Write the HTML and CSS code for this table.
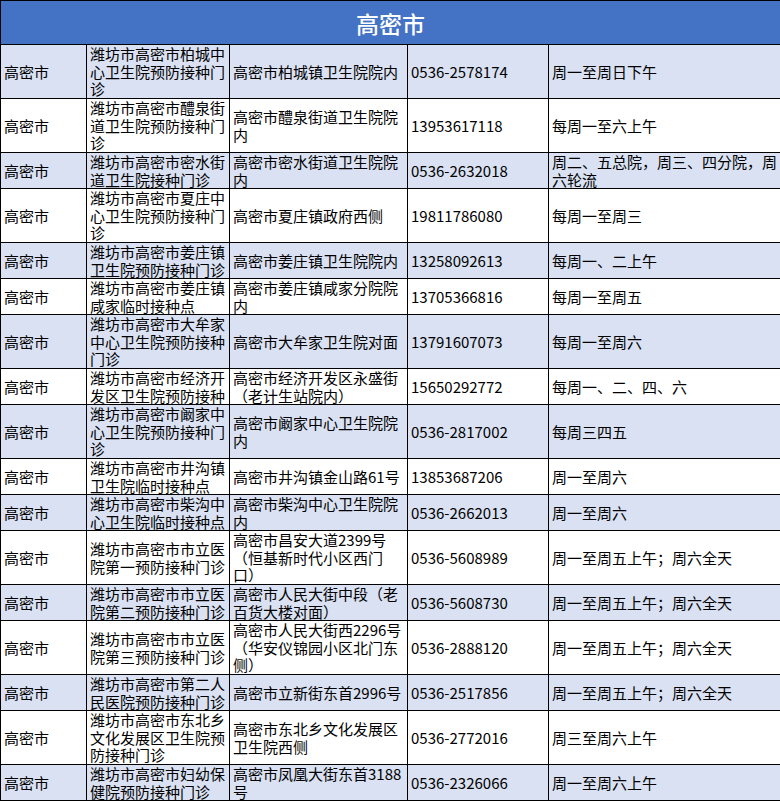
FILE: index.html
```html
<!DOCTYPE html>
<html lang="zh-CN">
<head>
<meta charset="utf-8">
<title>高密市预防接种门诊</title>
<link rel="stylesheet" href="styles.css">
</head>
<body>
<table class="sheet">
  <colgroup>
    <col class="c-city">
    <col class="c-name">
    <col class="c-addr">
    <col class="c-tel">
    <col class="c-time">
  </colgroup>
  <thead>
    <tr class="head"><th colspan="5">高密市</th></tr>
  </thead>
  <tbody>
    <tr class="r3 blue"><td>高密市</td><td>潍坊市高密市柏城中<br>心卫生院预防接种门<br>诊</td><td>高密市柏城镇卫生院院内</td><td>0536-2578174</td><td>周一至周日下午</td></tr>
    <tr class="r3"><td>高密市</td><td>潍坊市高密市醴泉街<br>道卫生院预防接种门<br>诊</td><td>高密市醴泉街道卫生院院<br>内</td><td>13953617118</td><td>每周一至六上午</td></tr>
    <tr class="r2 blue"><td>高密市</td><td>潍坊市高密市密水街<br>道卫生院接种门诊</td><td>高密市密水街道卫生院院<br>内</td><td>0536-2632018</td><td>周二、五总院，周三、四分院，周<br>六轮流</td></tr>
    <tr class="r3"><td>高密市</td><td>潍坊市高密市夏庄中<br>心卫生院预防接种门<br>诊</td><td>高密市夏庄镇政府西侧</td><td>19811786080</td><td>每周一至周三</td></tr>
    <tr class="r2 blue"><td>高密市</td><td>潍坊市高密市姜庄镇<br>卫生院预防接种门诊</td><td>高密市姜庄镇卫生院院内</td><td>13258092613</td><td>每周一、二上午</td></tr>
    <tr class="r2"><td>高密市</td><td>潍坊市高密市姜庄镇<br>咸家临时接种点</td><td>高密市姜庄镇咸家分院院<br>内</td><td>13705366816</td><td>每周一至周五</td></tr>
    <tr class="r3 blue"><td>高密市</td><td>潍坊市高密市大牟家<br>中心卫生院预防接种<br>门诊</td><td>高密市大牟家卫生院对面</td><td>13791607073</td><td>每周一至周六</td></tr>
    <tr class="r2"><td>高密市</td><td>潍坊市高密市经济开<br>发区卫生院预防接种</td><td>高密市经济开发区永盛街<br>（老计生站院内）</td><td>15650292772</td><td>每周一、二、四、六</td></tr>
    <tr class="r3 blue"><td>高密市</td><td>潍坊市高密市阚家中<br>心卫生院预防接种门<br>诊</td><td>高密市阚家中心卫生院院<br>内</td><td>0536-2817002</td><td>每周三四五</td></tr>
    <tr class="r2"><td>高密市</td><td>潍坊市高密市井沟镇<br>卫生院临时接种点</td><td>高密市井沟镇金山路61号</td><td>13853687206</td><td>周一至周六</td></tr>
    <tr class="r2 blue"><td>高密市</td><td>潍坊市高密市柴沟中<br>心卫生院临时接种点</td><td>高密市柴沟中心卫生院院<br>内</td><td>0536-2662013</td><td>周一至周六</td></tr>
    <tr class="r3"><td>高密市</td><td>潍坊市高密市市立医<br>院第一预防接种门诊</td><td>高密市昌安大道2399号<br>（恒基新时代小区西门<br>口）</td><td>0536-5608989</td><td>周一至周五上午；周六全天</td></tr>
    <tr class="r2 blue"><td>高密市</td><td>潍坊市高密市市立医<br>院第二预防接种门诊</td><td>高密市人民大街中段（老<br>百货大楼对面）</td><td>0536-5608730</td><td>周一至周五上午；周六全天</td></tr>
    <tr class="r3"><td>高密市</td><td>潍坊市高密市市立医<br>院第三预防接种门诊</td><td>高密市人民大街西2296号<br>（华安仪锦园小区北门东<br>侧）</td><td>0536-2888120</td><td>周一至周五上午；周六全天</td></tr>
    <tr class="r2 blue"><td>高密市</td><td>潍坊市高密市第二人<br>民医院预防接种门诊</td><td>高密市立新街东首2996号</td><td>0536-2517856</td><td>周一至周五上午；周六全天</td></tr>
    <tr class="r3"><td>高密市</td><td>潍坊市高密市东北乡<br>文化发展区卫生院预<br>防接种门诊</td><td>高密市东北乡文化发展区<br>卫生院西侧</td><td>0536-2772016</td><td>周三至周六上午</td></tr>
    <tr class="r2 blue"><td>高密市</td><td>潍坊市高密市妇幼保<br>健院预防接种门诊</td><td>高密市凤凰大街东首3188<br>号</td><td>0536-2326066</td><td>周一至周六上午</td></tr>
  </tbody>
</table>
</body>
</html>
```

FILE: styles.css
```css
html, body {
  margin: 0;
  padding: 0;
  background: #ffffff;
}

.sheet {
  width: 780px;
  table-layout: fixed;
  border-collapse: collapse;
  font-family: "Noto Sans CJK SC", "Noto Sans", sans-serif;
  font-size: 15px;
  line-height: 17.5px;
  color: #000000;
}

.c-city { width: 86px; }
.c-name { width: 143px; }
.c-addr { width: 178px; }
.c-tel  { width: 141px; }
.c-time { width: 232px; }

.sheet th,
.sheet td {
  border: 1px solid #000000;
  padding: 0 0 0 3px;
  vertical-align: middle;
  text-align: left;
  white-space: nowrap;
  overflow: hidden;
}

.head th {
  height: 43px;
  background: #4472c4;
  color: #ffffff;
  font-size: 23px;
  line-height: 28px;
  font-weight: 500;
  text-align: center;
  padding: 0;
}

.r3 td { height: 53px; }
.r2 td { height: 35px; }

.blue td { background: #d9e1f2; }
```
